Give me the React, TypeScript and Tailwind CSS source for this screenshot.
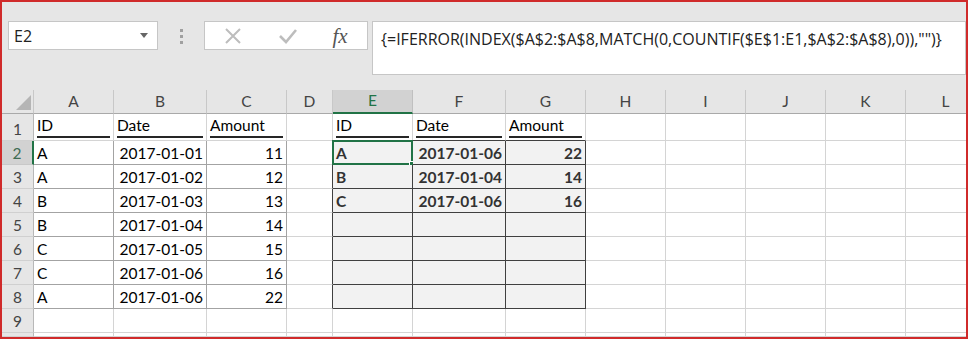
import React from "react";

const COLS = ["A", "B", "C", "D", "E", "F", "G", "H", "I", "J", "K", "L"];

const source = [
  ["A", "2017-01-01", "11"],
  ["A", "2017-01-02", "12"],
  ["B", "2017-01-03", "13"],
  ["B", "2017-01-04", "14"],
  ["C", "2017-01-05", "15"],
  ["C", "2017-01-06", "16"],
  ["A", "2017-01-06", "22"],
];

const result = [
  ["A", "2017-01-06", "22"],
  ["B", "2017-01-04", "14"],
  ["C", "2017-01-06", "16"],
];

const RIGHT = {
  light: "border-r-[#d4d4d4]",
  mid: "border-r-[#a3a3a3]",
  dark: "border-r-[#404040]",
};
const BOTTOM = {
  light: "border-b-[#d4d4d4]",
  mid: "border-b-[#a3a3a3]",
  dark: "border-b-[#404040]",
};

const Heading = ({ text }: { text: string }) => (
  <div className="h-full px-[3px] flex">
    <div className="flex-1 flex items-end border-b-2 border-[#262626] mb-[2px] pb-[1px] leading-[20px]">
      {text}
    </div>
  </div>
);

const Cell = ({ row, col }: { row: number; col: number }) => {
  const inSource = row >= 2 && row <= 8 && col <= 2;
  const inResult = row >= 2 && row <= 8 && col >= 4 && col <= 6;

  let right = RIGHT.light;
  if (inSource) right = RIGHT.mid;
  if (row >= 2 && row <= 8 && col >= 3 && col <= 6) right = RIGHT.dark;

  let bottom = BOTTOM.light;
  if (inSource) bottom = BOTTOM.mid;
  if (row >= 1 && row <= 8 && col >= 4 && col <= 6) bottom = BOTTOM.dark;

  const bg = inResult ? "bg-[#f2f2f2]" : "bg-white";
  const selected = row === 2 && col === 4;

  let content: React.ReactNode = null;
  if (row === 1 && (col <= 2 || (col >= 4 && col <= 6))) {
    content = <Heading text={["ID", "Date", "Amount"][col % 4]} />;
  } else if (row >= 2 && row <= 8 && col <= 2) {
    const v = source[row - 2][col];
    content = (
      <div
        className={
          col === 0
            ? "h-full flex items-end pb-[1px] pl-[3px] leading-[20px]"
            : "h-full flex items-end justify-end pb-[1px] pr-[3px] leading-[20px]"
        }
      >
        {v}
      </div>
    );
  } else if (row >= 2 && row <= 4 && col >= 4 && col <= 6) {
    const v = result[row - 2][col - 4];
    content = (
      <div
        className={
          col === 4
            ? "h-full flex items-end pb-[1px] pl-[3px] leading-[20px] font-bold text-[#333]"
            : "h-full flex items-end justify-end pb-[1px] pr-[3px] leading-[20px] font-bold text-[#333]"
        }
      >
        {v}
      </div>
    );
  }

  return (
    <div className={`relative border-r border-b ${right} ${bottom} ${bg}`}>
      {content}
      {selected && (
        <>
          <div className="absolute -left-[1px] -top-[1px] -right-[1px] -bottom-[1px] border-2 border-[#217346]" />
          <div className="absolute -right-[3px] -bottom-[3px] w-[6px] h-[6px] bg-[#217346] border border-white" />
        </>
      )}
    </div>
  );
};

const RowHeader = ({ row }: { row: number }) => {
  const active = row === 2;
  return (
    <div
      className={
        active
          ? "flex items-end justify-center pb-[1px] leading-[20px] bg-[#d2d2d2] text-[#3e6b52] border-r-2 border-r-[#217346] border-b border-b-[#c8c8c8]"
          : "flex items-end justify-center pb-[1px] leading-[20px] bg-[#e6e6e6] text-[#444] border-r border-r-[#b8b8b8] border-b border-b-[#d0d0d0]"
      }
    >
      {row <= 9 ? row : ""}
    </div>
  );
};

const ColHeader = ({ name }: { name: string }) => {
  const active = name === "E";
  return (
    <div
      className={
        active
          ? "flex items-center justify-center bg-[#d2d2d2] text-[#217346] border-r border-r-[#c0c0c0] border-b-2 border-b-[#217346]"
          : "flex items-center justify-center bg-[#e6e6e6] text-[#444] border-r border-r-[#c8c8c8] border-b border-b-[#a9a9a9]"
      }
    >
      {name}
    </div>
  );
};

const Toolbar = () => (
  <div className="flex h-[88px] pt-[19px] pl-[6px] font-['Open_Sans',sans-serif]">
    <div className="w-[150px] h-[29px] bg-white border border-[#c6c6c6] flex items-center justify-between pl-[5px] pr-[9px]">
      <span className="text-[16px] text-[#222]">E2</span>
      <svg width="8" height="5" viewBox="0 0 8 5">
        <path d="M0 0 L8 0 L4 5 Z" fill="#666" />
      </svg>
    </div>
    <div className="w-[46px] flex flex-col items-center gap-[3px] pt-[8px]">
      <span className="w-[3px] h-[3px] bg-[#a0a0a0]" />
      <span className="w-[3px] h-[3px] bg-[#a0a0a0]" />
      <span className="w-[3px] h-[3px] bg-[#a0a0a0]" />
    </div>
    <div className="w-[164px] h-[29px] bg-white border border-[#c6c6c6] flex items-center">
      <div className="w-[56px] flex justify-center">
        <svg width="20" height="20" viewBox="0 0 20 20">
          <path d="M3 3 L17 17 M17 3 L3 17" stroke="#bdbdbd" strokeWidth="2" />
        </svg>
      </div>
      <div className="w-[54px] flex justify-center">
        <svg width="20" height="20" viewBox="0 0 20 20">
          <path d="M2 10 L8 16 L18 4" stroke="#bdbdbd" strokeWidth="2.6" fill="none" />
        </svg>
      </div>
      <div className="flex-1 flex justify-center pr-[2px]">
        <span className="font-['Liberation_Serif',serif] italic text-[21px] leading-[24px] text-[#555]">fx</span>
      </div>
    </div>
    <div className="ml-[4px] flex-1 h-[54px] bg-white border border-[#c6c6c6] pl-[8px] pt-[5px]">
      <span className="text-[16px] leading-[20px] text-[#222]">
        {'{=IFERROR(INDEX($A$2:$A$8,MATCH(0,COUNTIF($E$1:E1,$A$2:$A$8),0)),"")}'}
      </span>
    </div>
  </div>
);

export default function App() {
  const rows = [1, 2, 3, 4, 5, 6, 7, 8, 9, 10];
  return (
    <div className="w-[968px] h-[339px] overflow-hidden bg-[#e6e6e6] border-2 border-[#d02b2b] flex flex-col">
      <Toolbar />
      <div className="flex-1 grid grid-cols-[32px_80px_93px_80px_46px_80px_93px_80px_80px_80px_80px_80px_80px] grid-rows-[24px_27px_24px_24px_24px_24px_24px_24px_24px_24px_1fr] font-['Lato',sans-serif] text-[15.5px] text-black overflow-hidden">
        <div className="bg-[#e6e6e6] border-r border-r-[#c8c8c8] border-b border-b-[#a9a9a9] flex items-end justify-end pr-[2px] pb-[3px]">
          <svg width="15" height="15" viewBox="0 0 15 15">
            <path d="M15 0 L15 15 L0 15 Z" fill="#b5b5b5" />
          </svg>
        </div>
        {COLS.map((c) => (
          <ColHeader key={c} name={c} />
        ))}
        {rows.map((r) => (
          <React.Fragment key={r}>
            <RowHeader row={r} />
            {COLS.map((c, i) => (
              <Cell key={c} row={r} col={i} />
            ))}
          </React.Fragment>
        ))}
      </div>
    </div>
  );
}
